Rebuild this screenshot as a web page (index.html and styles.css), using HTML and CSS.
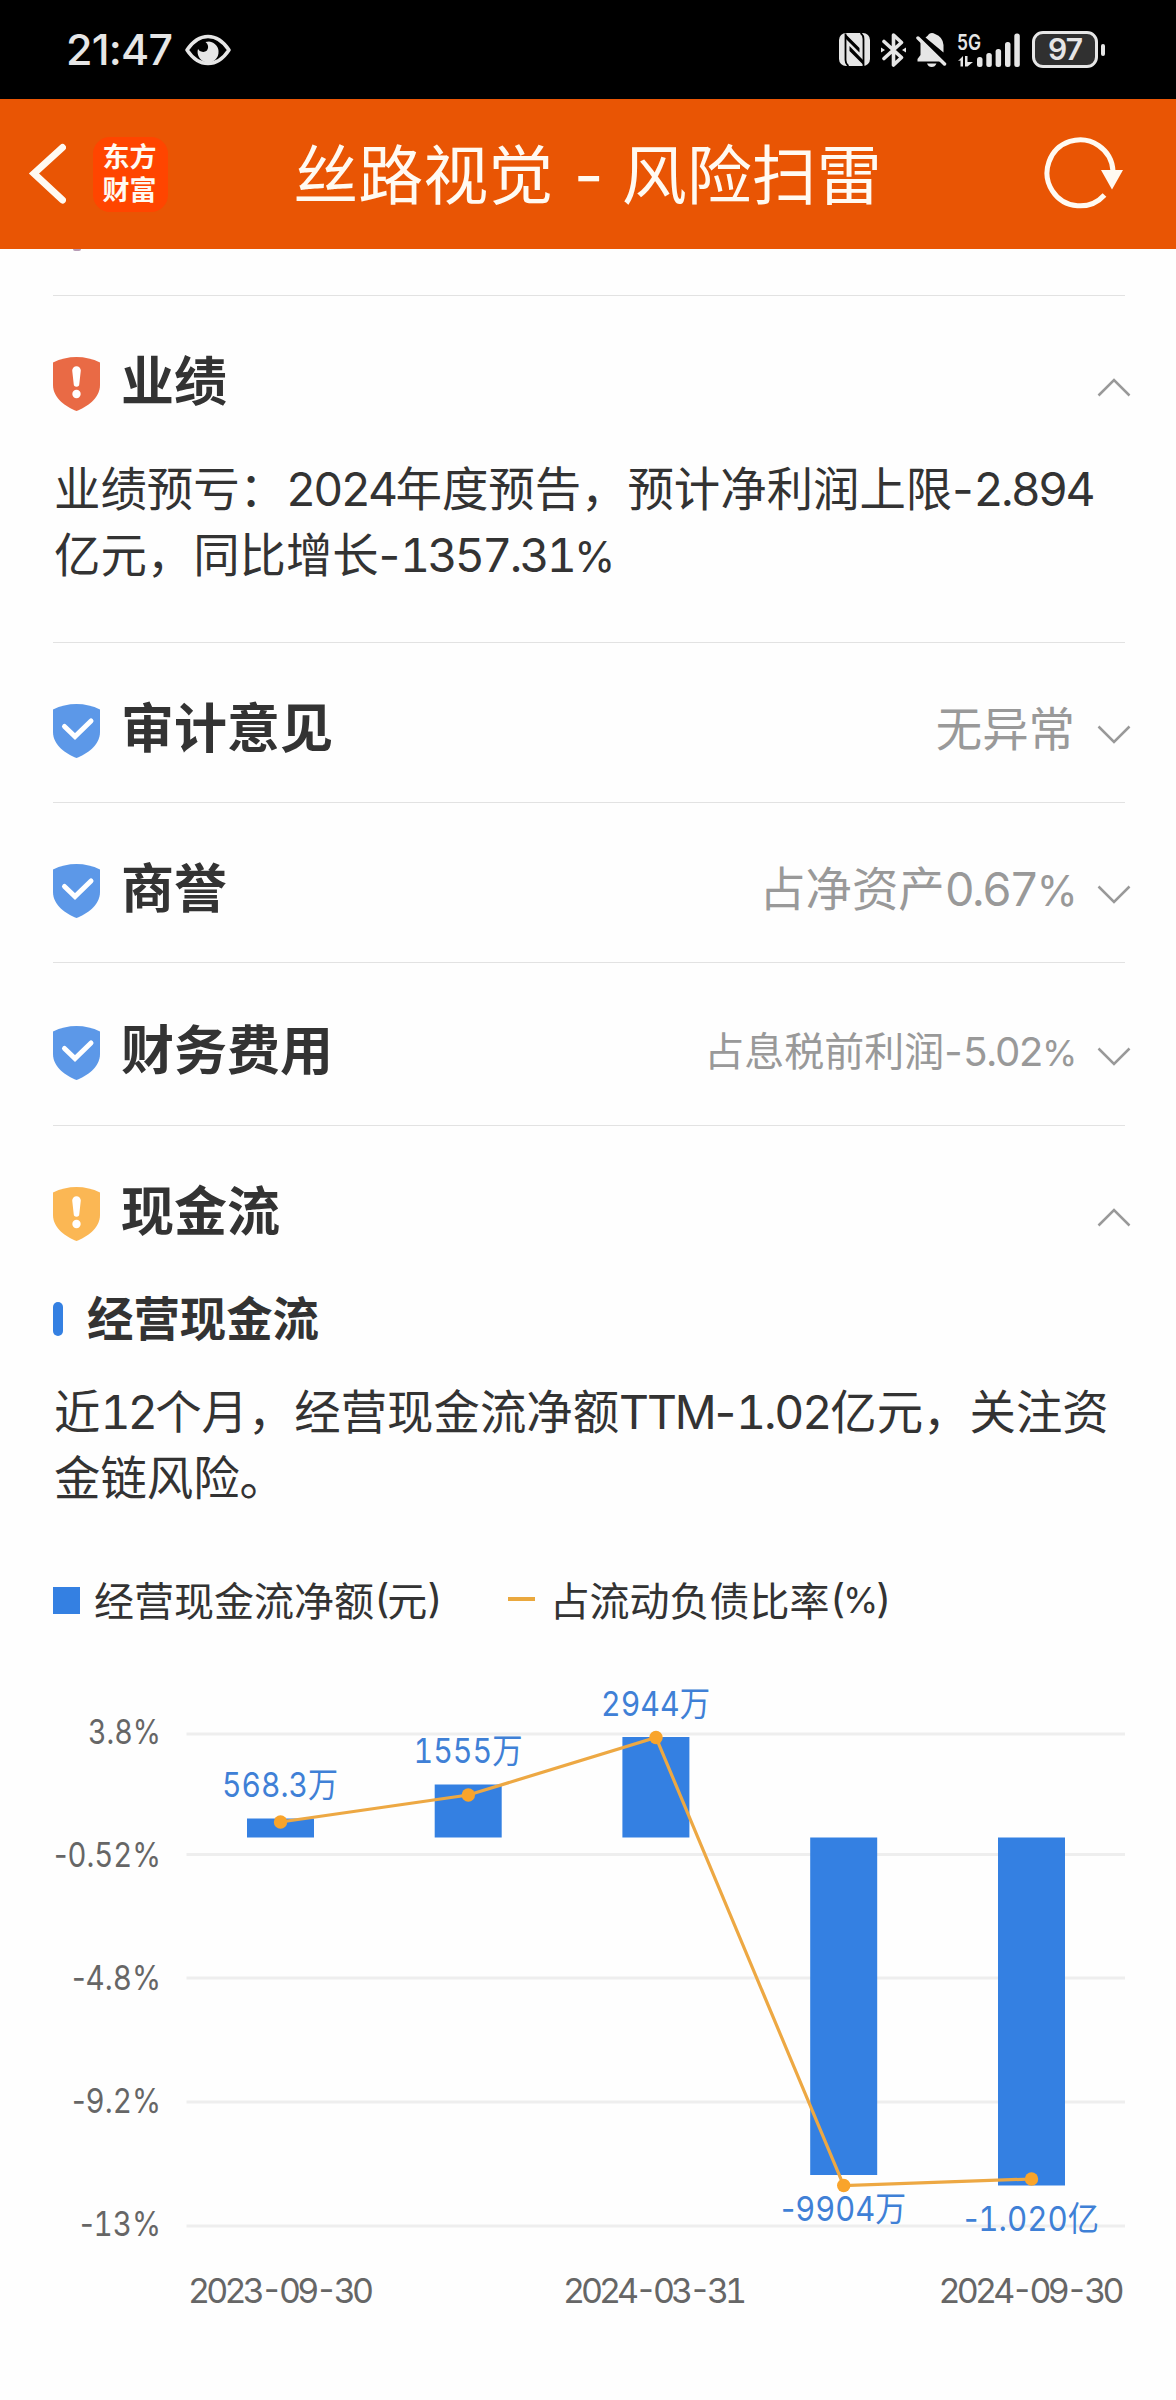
FILE: index.html
```html
<!DOCTYPE html>
<html lang="zh-CN">
<head>
<meta charset="utf-8">
<title>丝路视觉 - 风险扫雷</title>
<link rel="stylesheet" href="styles.css">
</head>
<body>
<svg class="defs" width="0" height="0" aria-hidden="true">
  <symbol id="shield" viewBox="0 0 47 54"><path d="M0 5.5Q11 0 23.500 0Q36 0 47 5.500V28C47 41 34 50 23.500 54C13 50 0 41 0 28Z" fill="currentColor"/></symbol>
  <symbol id="warn" viewBox="0 0 47 54"><use href="#shield" width="47" height="54"/><path d="M19.200 13.500a4.300 4.300 0 0 1 8.600 0L26.300 27a2.800 2.800 0 0 1-5.600 0Z" fill="#fff"/><circle cx="23.500" cy="37" r="4.200" fill="#fff"/></symbol>
  <symbol id="ok" viewBox="0 0 47 54"><use href="#shield" width="47" height="54"/><path d="M11.500 22.500L22 32.500L38 17" fill="none" stroke="#fff" stroke-width="5" stroke-linecap="round" stroke-linejoin="miter"/></symbol>
  <symbol id="chev" viewBox="0 0 34 20"><path d="M1.500 1.500L17 17L32.500 1.500" fill="none" stroke="#999" stroke-width="2.500"/></symbol>
</svg>

<div class="status">
  <div class="status-left">
    <span class="time">21:47</span>
    <svg class="eye" width="46" height="32" viewBox="0 0 46 32"><path d="M2 16C8 7 15 2.500 23 2.500S38 7 44 16C38 25 31 29.500 23 29.500S8 25 2 16Z" fill="none" stroke="#e6e6e6" stroke-width="3.500" stroke-linejoin="round"/><path d="M24 7.500a10.500 10.500 0 1 1-11 7.500a6 6 0 0 0 9 1.500a6 6 0 0 0-1.500-8.500Z" fill="#e6e6e6"/></svg>
  </div>
  <div class="status-right">
    <svg class="nfc" width="31" height="33" viewBox="0 0 31 33"><rect width="31" height="33" rx="7" fill="#e6e6e6"/><path d="M6.500 0.500V27Q6.500 31 9.500 33M24.500 33V6Q24.500 2 21.500 0" fill="none" stroke="#000" stroke-width="1.800"/><path d="M7 1.500L20.500 15V19.500L7 6ZM10.500 13L24 27V31.500L10.500 18Z" fill="#000"/></svg>
    <svg class="bt" width="25" height="34" viewBox="0 0 25 34"><path d="M3 8.500L20.500 24.500L12.500 32V2L20.500 9.500L3 25.500" fill="none" stroke="#e6e6e6" stroke-width="3.600" stroke-linecap="round" stroke-linejoin="round"/><path d="M0 14.500L4 17L0 19.500ZM25 14.500L21 17L25 19.500Z" fill="#e6e6e6"/></svg>
    <svg class="bell" width="31" height="34" viewBox="0 0 31 34"><path d="M4.500 9L24.500 28.500H1.500V26L4.500 22ZM9.500 4.500Q12 2.500 13 1Q16-1 19 1Q27 4 27.500 12V19.500Z" fill="#e6e6e6"/><path d="M2 5L28.500 31" stroke="#e6e6e6" stroke-width="3.500" stroke-linecap="round"/><path d="M11 30.500H20.500Q19 34 15.700 34T11 30.500Z" fill="#e6e6e6"/></svg>
    <svg class="signal" width="62" height="34" viewBox="0 0 62 34"><text x="-1" y="16.500" class="net" textLength="24" lengthAdjust="spacingAndGlyphs">5G</text><g fill="#e6e6e6"><path d="M0 28L5 23V33.500H2.500V27.500ZM7 23H9.500V29H15L9.500 33.500H7Z"/><rect x="19" y="24" width="5.500" height="10" rx="2.500"/><rect x="28.300" y="20" width="5.500" height="14" rx="2.500"/><rect x="37.600" y="16" width="5.500" height="18" rx="2.500"/><rect x="47" y="9" width="5.500" height="25" rx="2.500"/><rect x="56.300" y="0.500" width="5.500" height="33.500" rx="2.500"/></g></svg>
    <div class="battery">97</div><i class="nub"></i>
  </div>
</div>

<header class="bar">
  <div class="bar-left">
    <svg width="38" height="62" viewBox="0 0 38 62"><path d="M34.500 4.500L6 30.500L34.500 57" fill="none" stroke="#fffaf2" stroke-width="7" stroke-linecap="round" stroke-linejoin="miter"/></svg>
    <div class="logo">东方<br>财富</div>
  </div>
  <h1>丝路视觉<span class="num"> - </span>风险扫雷</h1>
  <svg class="refresh" width="80" height="74" viewBox="0 0 80 74"><path d="M69 34A33 33 0 1 0 60.500 58" fill="none" stroke="#fffaf2" stroke-width="5"/><path d="M57 33H79L68 52.500Z" fill="#fffaf2"/></svg>
</header>

<main>
  <div class="prev"><i></i></div>

  <section>
    <div class="head"><svg class="ic red"><use href="#warn"/></svg><h2>业绩</h2><svg class="chev up"><use href="#chev"/></svg></div>
    <p>业绩预亏：<span class="num">2024</span>年度预告，预计净利润上限<span class="num"><span class="dash">-</span>2.894</span><br>亿元，同比增长<span class="num"><span class="dash">-</span>1357.31<span class="pct">%</span></span></p>
  </section>

  <section class="row"><div class="head"><svg class="ic blue"><use href="#ok"/></svg><h2>审计意见</h2><span class="val">无异常</span><svg class="chev"><use href="#chev"/></svg></div></section>
  <section class="row"><div class="head"><svg class="ic blue"><use href="#ok"/></svg><h2>商誉</h2><span class="val">占净资产<span class="num">0.67<span class="pct">%</span></span></span><svg class="chev"><use href="#chev"/></svg></div></section>
  <section class="row tall"><div class="head"><svg class="ic blue"><use href="#ok"/></svg><h2>财务费用</h2><span class="val small">占息税前利润<span class="num"><span class="dash">-</span>5.02<span class="pct">%</span></span></span><svg class="chev"><use href="#chev"/></svg></div></section>

  <section class="cash">
    <div class="head"><svg class="ic amber"><use href="#warn"/></svg><h2>现金流</h2><svg class="chev up"><use href="#chev"/></svg></div>
    <h3>经营现金流</h3>
    <p>近<span class="num">12</span>个月，经营现金流净额<span class="num ttm">TTM<span class="dash">-</span>1.02</span>亿元，关注资<br>金链风险。</p>
    <div class="legend">
      <span class="key"><i class="sq"></i>经营现金流净额<span class="num">(</span>元<span class="num">)</span></span>
      <span class="key"><i class="ln"></i>占流动负债比率<span class="num">(<span class="pct">%</span>)</span></span>
    </div>
    <svg class="chart" width="1072" height="660" viewBox="53 1670 1072 660">
      <g class="grid"><path d="M186.500 1734H1125M186.500 1854.500H1125M186.500 1978H1125M186.500 2102H1125M186.500 2226H1125"/></g>
      <g class="ylab">
        <text x="161" y="1744" textLength="73" lengthAdjust="spacingAndGlyphs">3.8%</text>
        <text x="161" y="1867" textLength="107" lengthAdjust="spacingAndGlyphs"><tspan class="dash">-</tspan>0.52%</text>
        <text x="161" y="1989.500" textLength="89" lengthAdjust="spacingAndGlyphs"><tspan class="dash">-</tspan>4.8%</text>
        <text x="161" y="2112.500" textLength="89" lengthAdjust="spacingAndGlyphs"><tspan class="dash">-</tspan>9.2%</text>
        <text x="161" y="2235.500" textLength="81" lengthAdjust="spacingAndGlyphs"><tspan class="dash">-</tspan>13%</text>
      </g>
      <g fill="#3480e2">
        <rect x="247" y="1818.500" width="67" height="19"/>
        <rect x="434.700" y="1784.500" width="67" height="53"/>
        <rect x="622.400" y="1737" width="67" height="100.500"/>
        <rect x="810.200" y="1837.500" width="67" height="337.500"/>
        <rect x="998" y="1837.500" width="67" height="348"/>
      </g>
      <g class="trend">
        <path d="M280.500 1822L468.300 1795L656 1737.500L843.700 2185.500L1031.500 2179"/>
        <circle cx="280.500" cy="1822" r="6.700"/><circle cx="468.300" cy="1795" r="6.700"/><circle cx="656" cy="1737.500" r="6.700"/><circle cx="843.700" cy="2185.500" r="6.700"/><circle cx="1031.500" cy="2179" r="6.700"/>
      </g>
      <g class="vlab">
        <text x="280" y="1796.500" textLength="116" lengthAdjust="spacingAndGlyphs">568.3万</text>
        <text x="468" y="1763" textLength="109" lengthAdjust="spacingAndGlyphs">1555万</text>
        <text x="655.500" y="1716" textLength="109" lengthAdjust="spacingAndGlyphs">2944万</text>
        <text x="843.500" y="2220.500" textLength="125" lengthAdjust="spacingAndGlyphs"><tspan class="dash">-</tspan>9904万</text>
        <text x="1031.500" y="2230.500" textLength="135" lengthAdjust="spacingAndGlyphs"><tspan class="dash">-</tspan>1.020亿</text>
      </g>
      <g class="xlab">
        <text x="281" y="2302.500" textLength="186">2023-09-30</text>
        <text x="655" y="2302.500" textLength="184">2024-03-31</text>
        <text x="1031.500" y="2302.500" textLength="186">2024-09-30</text>
      </g>
    </svg>
  </section>
</main>
</body>
</html>
```

FILE: styles.css
```css
* { box-sizing: border-box; }
body {
  margin: 0;
  width: 1176px;
  height: 2400px;
  overflow: hidden;
  background: #fefefe;
  color: #333;
  font-family: "Noto Sans CJK SC", sans-serif;
}
h1, h2, h3, p { margin: 0; }
i { display: block; }
svg { display: block; flex: none; }
.defs { position: absolute; }
.num {
  font-family: Inter, "Noto Sans CJK SC", sans-serif;
  font-feature-settings: "tnum";
  letter-spacing: -0.058em;
  line-height: 0;
  white-space: pre;
}
.dash { font-feature-settings: normal; letter-spacing: 0; }
.pct { font-size: 0.9em; }
.ttm { letter-spacing: -0.045em; }

.status {
  height: 99px;
  background: #000;
  display: flex;
  justify-content: space-between;
  padding: 0 71px 0 66px;
  color: #e6e6e6;
}
.status-left, .status-right { display: flex; align-items: center; }
.time { font: 500 43px/99px Inter, sans-serif; width: 119px; letter-spacing: -0.8px; white-space: nowrap; }
.bt { margin-left: 11px; }
.bell { margin-left: 10px; }
.signal { margin-left: 11px; overflow: visible; }
.net { font: 600 22px Inter, sans-serif; fill: #e6e6e6; }
.battery {
  width: 66px;
  height: 37px;
  margin-left: 12px;
  border: 3px solid #e6e6e6;
  border-radius: 11px;
  background: #303030;
  font: 600 30px/31px Inter, sans-serif;
  text-align: center;
  letter-spacing: -1px;
}
.nub { width: 4px; height: 12px; margin-left: 3px; border-radius: 2px; background: #e6e6e6; }

.bar {
  height: 150px;
  background: #e95504;
  display: grid;
  grid-template-columns: 1fr auto 1fr;
  align-items: center;
  padding: 0 52px 0 28px;
  color: #fffaf2;
}
.bar-left { display: flex; align-items: center; gap: 27px; }
.logo {
  width: 75px;
  height: 75px;
  border-radius: 17px;
  background: #ff4500;
  padding: 2px 2px 0 0;
  text-align: center;
  font-size: 27px;
  line-height: 33px;
  font-weight: 700;
}
.bar h1 { font-size: 65px; line-height: 90px; font-weight: 400; white-space: nowrap; padding: 0 0 6px 23px; }
.bar h1 .num { letter-spacing: -0.045em; }
.refresh { justify-self: end; }

main { padding: 0 51px 0 53px; }
.prev { height: 47px; border-bottom: 1px solid #e2e2e2; }
.prev i { width: 8px; height: 2px; margin-left: 20px; border-radius: 0 0 4px 4px; background: #b79bb5; }
section { height: 347px; padding-top: 48px; border-bottom: 1px solid #e2e2e2; }
.row { height: 160px; }
.tall { height: 163px; padding-top: 50px; }
.cash { height: auto; border: 0; }
.head { height: 74px; display: flex; align-items: center; }
.ic { width: 47px; height: 54px; margin-top: 6px; }
.red { color: #e96a45; }
.blue { color: #5c98e8; }
.amber { color: #fbb754; }
h2 { flex: 1; margin-left: 21px; font-size: 53px; line-height: 70px; font-weight: 700; padding-bottom: 6px; }
.val { font-size: 46.4px; line-height: 66px; color: #999; padding-bottom: 5px; white-space: nowrap; }
.small { font-size: 40px; padding-bottom: 2px; }
.chev { width: 34px; height: 20px; margin: 14px -6px 0 22px; }
.up { margin-top: 12px; transform: scaleY(-1); }
p { margin-top: 35px; padding-left: 1px; font-size: 46.4px; line-height: 65.7px; white-space: nowrap; }

h3 {
  display: flex;
  align-items: center;
  gap: 24px;
  height: 66px;
  margin-top: 35px;
  font-size: 46.4px;
  line-height: 60px;
  font-weight: 700;
}
h3::before { content: ""; width: 10px; height: 34px; margin-top: 5px; border-radius: 5px; background: #3480e2; }
.cash p { margin-top: 27px; }
.legend { display: flex; gap: 67px; height: 60px; margin-top: 61.6px; font-size: 40px; line-height: 60px; white-space: nowrap; }
.key { display: flex; align-items: center; }
.sq { width: 27px; height: 27px; margin: 3px 14px 0 0; background: #3480e2; }
.ln { width: 27px; height: 4px; margin: 0 15px 0 0; background: #eaa83e; }

.chart { margin-top: 41px; overflow: visible; font-family: Inter, "Noto Sans CJK SC", sans-serif; font-size: 34px; font-feature-settings: "tnum"; }
.grid path { stroke: #eee; stroke-width: 3; }
.ylab { text-anchor: end; fill: #666; }
.xlab { text-anchor: middle; fill: #666; }
.vlab { text-anchor: middle; fill: #3f80d6; }
.trend path { fill: none; stroke: #eda843; stroke-width: 3.2; }
.trend circle { fill: #f9a42b; }
```
